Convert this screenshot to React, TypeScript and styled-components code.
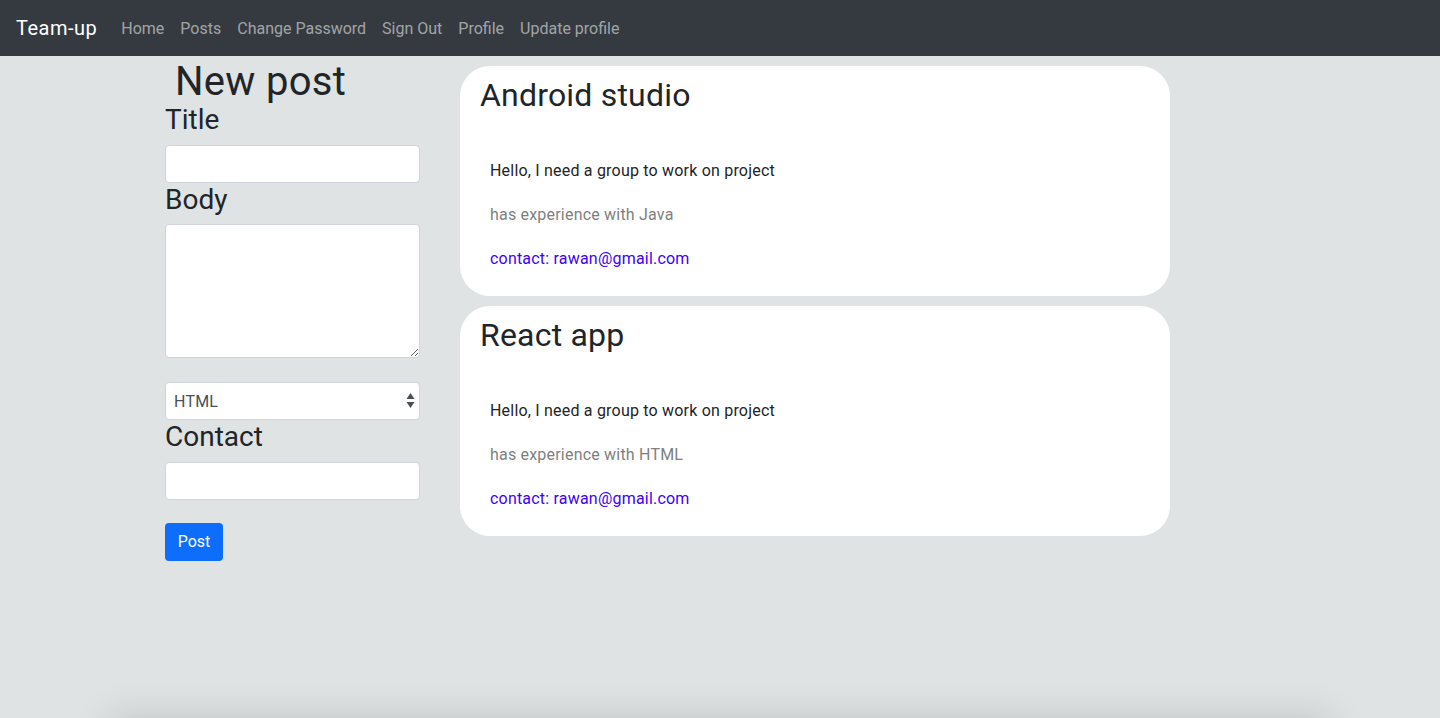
import React from "react";
import styled, { createGlobalStyle } from "styled-components";

const Global = createGlobalStyle`
  html, body { margin: 0; padding: 0; background: #dfe3e4; }
  body { font-family: Roboto, "Liberation Sans", Arial, sans-serif; color: #212529; }
  * { box-sizing: border-box; }
`;

const Page = styled.div`
  display: flex;
  flex-direction: column;
  min-height: 718px;
`;

const Nav = styled.nav`
  height: 56px;
  background: #343a40;
  display: flex;
  align-items: center;
  padding: 0 16px;
`;

const Brand = styled.a`
  color: #fff;
  font-size: 20px;
  letter-spacing: 0.5px;
  margin-right: 16px;
  text-decoration: none;
`;

const NavLink = styled.a`
  color: rgba(255, 255, 255, 0.55);
  font-size: 16px;
  padding: 8px;
  text-decoration: none;
`;

const Main = styled.main`
  flex: 1;
  width: 1140px;
  margin: 0 auto;
  padding: 0 15px;
  display: grid;
  grid-template-columns: 255px 730px;
  column-gap: 30px;
  align-items: start;
`;

const FormCol = styled.form`
  display: flex;
  flex-direction: column;
  align-items: stretch;
`;

const Heading = styled.h1`
  margin: 0 0 0 10px;
  padding-top: 5px;
  font-size: 40px;
  font-weight: 400;
  line-height: 42px;
  letter-spacing: 0.3px;
`;

const Label = styled.label`
  display: block;
  font-size: 28px;
  line-height: 1.2;
  margin: 0 0 8px;
`;

const Field = styled.input`
  height: 38px;
  width: 100%;
  border: 1px solid #ced4da;
  border-radius: 4px;
  background: #fff;
  font: inherit;
  font-size: 16px;
  padding: 6px 12px;
`;

const Area = styled.textarea`
  height: 134px;
  width: 100%;
  border: 1px solid #ced4da;
  border-radius: 4px;
  background: #fff;
  font: inherit;
  font-size: 16px;
  padding: 6px 12px;
  display: block;
`;

const SelectWrap = styled.div`
  position: relative;
  margin-top: 24px;
`;

const Select = styled.select`
  appearance: none;
  -webkit-appearance: none;
  height: 38px;
  width: 100%;
  border: 1px solid #ced4da;
  border-radius: 4px;
  background: #fff;
  font: inherit;
  font-size: 16px;
  letter-spacing: 0.2px;
  color: #495057;
  padding: 0 8px;
  display: block;
`;

const Arrows = styled.svg`
  position: absolute;
  right: 5px;
  top: 11px;
  pointer-events: none;
`;

const Button = styled.button`
  align-self: flex-start;
  margin-top: 23px;
  height: 38px;
  width: 58px;
  border: none;
  border-radius: 4px;
  background: #0d6efd;
  color: #fff;
  font: inherit;
  font-size: 16px;
  padding: 0;
`;

const Posts = styled.div`
  display: flex;
  flex-direction: column;
  gap: 10px;
  padding: 10px 10px 0;
`;

const Card = styled.article`
  background: #fff;
  border-radius: 30px;
  padding: 10px 20px 24px;
  height: 230px;
`;

const CardTitle = styled.h2`
  margin: 0 0 45px;
  font-size: 32px;
  font-weight: 400;
  line-height: 1.2;
  letter-spacing: 0.2px;
`;

const Line = styled.p<{ $tone: "body" | "muted" | "link" }>`
  margin: 0 0 20px;
  padding-left: 10px;
  font-size: 16px;
  line-height: 24px;
  letter-spacing: 0.2px;
  color: ${(p) => (p.$tone === "muted" ? "#808080" : p.$tone === "link" ? "#3d00ff" : "#212529")};
  &:last-child { margin-bottom: 0; }
`;

const Footer = styled.footer`
  height: 60px;
  margin: 0 110px;
  background: #dfe3e4;
  box-shadow: 0 0 40px rgba(0, 0, 0, 0.14);
`;

const posts = [
  { title: "Android studio", skill: "Java" },
  { title: "React app", skill: "HTML" },
];

export default function App() {
  return (
    <>
      <Global />
      <Page>
        <Nav>
          <Brand href="#">Team-up</Brand>
          <NavLink href="#">Home</NavLink>
          <NavLink href="#">Posts</NavLink>
          <NavLink href="#">Change Password</NavLink>
          <NavLink href="#">Sign Out</NavLink>
          <NavLink href="#">Profile</NavLink>
          <NavLink href="#">Update profile</NavLink>
        </Nav>
        <Main>
          <FormCol onSubmit={(e) => e.preventDefault()}>
            <Heading>New post</Heading>
            <Label>Title</Label>
            <Field type="text" />
            <Label>Body</Label>
            <Area />
            <SelectWrap>
              <Select defaultValue="HTML">
                <option>HTML</option>
                <option>Java</option>
              </Select>
              <Arrows width="9" height="15" viewBox="0 0 9 15">
                <path d="M4.5 0 L8.5 6 L0.5 6 Z" fill="#4a4f55" />
                <path d="M4.5 15 L8.5 9 L0.5 9 Z" fill="#4a4f55" />
              </Arrows>
            </SelectWrap>
            <Label>Contact</Label>
            <Field type="text" />
            <Button type="submit">Post</Button>
          </FormCol>
          <Posts>
            {posts.map((p) => (
              <Card key={p.title}>
                <CardTitle>{p.title}</CardTitle>
                <Line $tone="body">Hello, I need a group to work on project</Line>
                <Line $tone="muted">has experience with {p.skill}</Line>
                <Line $tone="link">contact: rawan@gmail.com</Line>
              </Card>
            ))}
          </Posts>
        </Main>
      </Page>
      <Footer />
    </>
  );
}
